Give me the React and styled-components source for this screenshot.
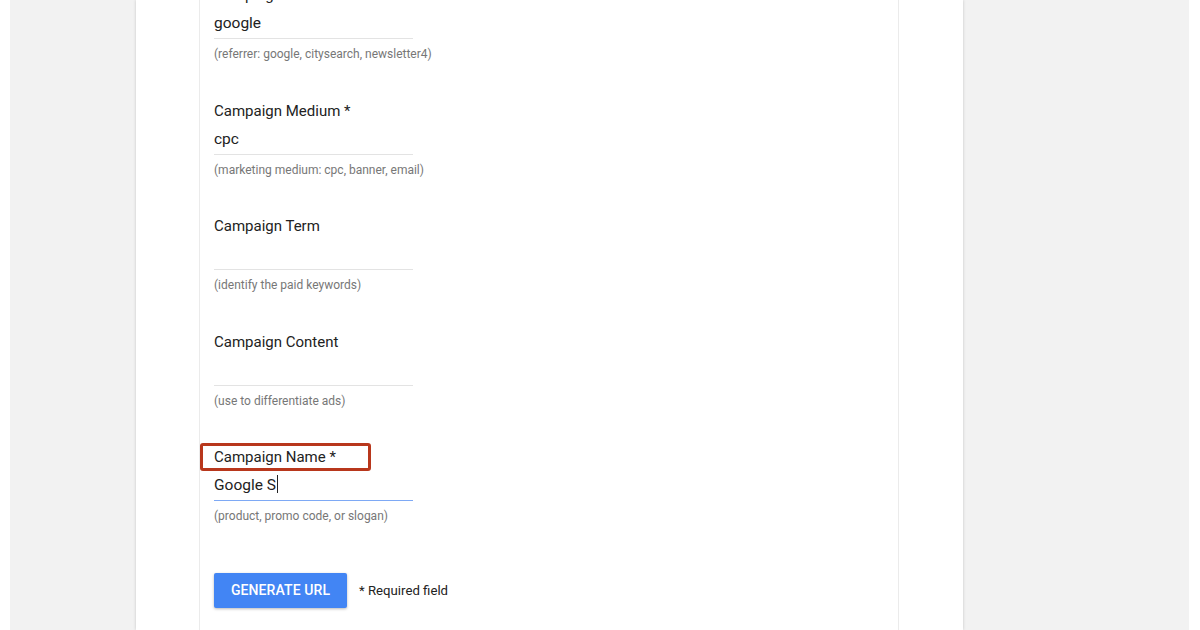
import styled, { createGlobalStyle } from "styled-components";

const GlobalStyle = createGlobalStyle`
  html, body {
    margin: 0;
    background: #ffffff;
    font-family: Roboto, "Noto Sans", Arial, sans-serif;
  }
`;

const Page = styled.div`
  height: 630px;
  padding: 0 11px 0 10px;
  overflow: hidden;
  box-sizing: border-box;
  display: flex;
`;

const Backdrop = styled.div`
  flex: 1;
  background: #f2f2f2;
  display: flex;
  padding-left: 126px;
`;

const Card = styled.div`
  width: 827px;
  background: #ffffff;
  box-shadow: 0 0 3px rgba(0, 0, 0, 0.18);
  padding-left: 63px;
  box-sizing: border-box;
  display: flex;
`;

const Panel = styled.div`
  width: 700px;
  box-sizing: border-box;
  border-left: 1px solid #ebebeb;
  border-right: 1px solid #ebebeb;
  padding-left: 14px;
`;

const Form = styled.div`
  margin-top: -15px;
  display: flex;
  flex-direction: column;
`;

const Field = styled.div`
  height: 115.5px;
  display: flex;
  flex-direction: column;
  align-items: flex-start;
`;

const Label = styled.label`
  position: relative;
  display: inline-block;
  font-size: 15px;
  line-height: 20px;
  color: #222222;

  ${(p) =>
    p.$highlight &&
    `
    &::after {
      content: "";
      position: absolute;
      top: -4px;
      bottom: -4px;
      left: -14px;
      right: -35px;
      border: 3px solid #b8371c;
      border-radius: 3px;
    }
  `}
`;

const Input = styled.div`
  width: 199px;
  padding: 8px 0 5px;
  font-size: 15.5px;
  line-height: 20px;
  height: 20px;
  color: #222222;
  border-bottom: 1px solid ${(p) => (p.$focused ? "#7ea9f5" : "#e3e3e3")};
`;

const Caret = styled.span`
  display: inline-block;
  width: 0;
  height: 18px;
  border-left: 1px solid #222222;
  vertical-align: -3px;
  margin-left: 1px;
`;

const Helper = styled.div`
  margin-top: 7px;
  font-size: 12px;
  line-height: 16px;
  color: #777777;
`;

const Actions = styled.div`
  margin-top: 10px;
  display: flex;
  align-items: center;
  gap: 12px;
`;

const Button = styled.button`
  width: 133px;
  height: 35px;
  border: none;
  border-radius: 2px;
  background: #4285f4;
  color: #ffffff;
  font-family: inherit;
  font-size: 14px;
  font-weight: 500;
  letter-spacing: 0.1px;
  box-shadow: 0 1px 3px rgba(0, 0, 0, 0.28);
  cursor: pointer;
`;

const Note = styled.span`
  font-size: 13.2px;
  color: #222222;
`;

const fields = [
  { label: "Campaign Source *", value: "google", help: "(referrer: google, citysearch, newsletter4)" },
  { label: "Campaign Medium *", value: "cpc", help: "(marketing medium: cpc, banner, email)" },
  { label: "Campaign Term", value: "", help: "(identify the paid keywords)" },
  { label: "Campaign Content", value: "", help: "(use to differentiate ads)" },
  { label: "Campaign Name *", value: "Google S", help: "(product, promo code, or slogan)", active: true },
];

export default function App() {
  return (
    <>
      <GlobalStyle />
      <Page>
        <Backdrop>
          <Card>
            <Panel>
              <Form>
                {fields.map((f) => (
                  <Field key={f.label}>
                    <Label $highlight={f.active}>{f.label}</Label>
                    <Input $focused={f.active}>
                      {f.value}
                      {f.active && <Caret />}
                    </Input>
                    <Helper>{f.help}</Helper>
                  </Field>
                ))}
                <Actions>
                  <Button>GENERATE URL</Button>
                  <Note>* Required field</Note>
                </Actions>
              </Form>
            </Panel>
          </Card>
        </Backdrop>
      </Page>
    </>
  );
}
